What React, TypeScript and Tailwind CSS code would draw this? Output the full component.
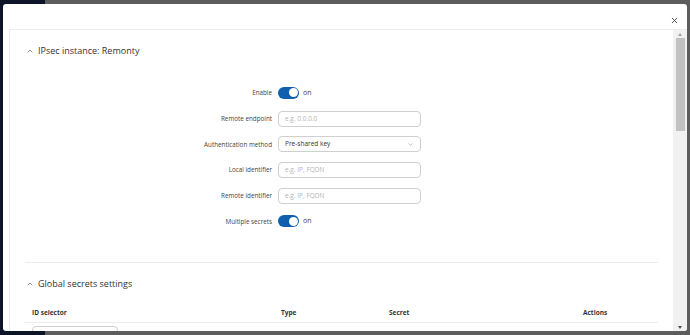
import { ChevronUp, ChevronDown, X } from "lucide-react"

const font = { fontFamily: '"Open Sans", "Noto Sans", sans-serif' }

function Toggle() {
  return (
    <div className="flex items-center gap-[4px]">
      <div className="w-[21px] h-[12px] rounded-full bg-[#0f5fae] flex items-center justify-end pr-[1.5px]">
        <div className="w-[9px] h-[9px] rounded-full bg-white" />
      </div>
      <span className="text-[7px] text-[#444]">on</span>
    </div>
  )
}

function TextInput({ placeholder }: { placeholder: string }) {
  return (
    <div className="w-[143px] h-[16px] rounded-[4px] border border-[#cfcfcf] flex items-center px-[6px]">
      <span className="text-[6.5px] text-[#b5b5b5]">{placeholder}</span>
    </div>
  )
}

function Row({ label, children }: { label: string; children: React.ReactNode }) {
  return (
    <div className="h-[25.7px] flex items-center">
      <div className="w-[253px] text-right text-[6.3px] text-[#444] pr-[6px]">{label}</div>
      {children}
    </div>
  )
}

export default function App() {
  return (
    <div className="relative w-[690px] h-[335px] bg-[#5d5d5d] overflow-hidden" style={font}>
      <div className="w-[45px] h-full bg-[#0e1428]" />

      {/* modal */}
      <div className="absolute left-[3px] top-[4px] w-[684px] h-[327px] bg-white rounded-[3px] flex flex-col overflow-hidden">
        <div className="h-[25px] flex justify-end items-end pr-[8px] pb-[4px]">
          <X size={9} strokeWidth={2.2} className="text-[#333]" />
        </div>

        <div className="flex-1 ml-[6px] border-t border-l border-[#ececec] flex min-h-0">
          <div className="flex-1 pl-[15px] pr-[15px] overflow-hidden">
            <div className="h-[40px] flex items-center pt-[1px] gap-[4px] pl-[1px]">
              <ChevronUp size={8} strokeWidth={2} className="text-[#555]" />
              <span className="text-[9px] font-medium text-[#333]">IPsec instance: Remonty</span>
            </div>

            <div className="pt-[10px] pb-[28px] border-b border-[#ececec]">
              <Row label="Enable">
                <Toggle />
              </Row>
              <Row label="Remote endpoint">
                <TextInput placeholder="e.g. 0.0.0.0" />
              </Row>
              <Row label="Authentication method">
                <div className="w-[143px] h-[16px] rounded-[4px] border border-[#cfcfcf] flex items-center justify-between px-[6px]">
                  <span className="text-[6.5px] text-[#333]">Pre-shared key</span>
                  <ChevronDown size={7} strokeWidth={1.5} className="text-[#777]" />
                </div>
              </Row>
              <Row label="Local identifier">
                <TextInput placeholder="e.g. IP, FQDN" />
              </Row>
              <Row label="Remote identifier">
                <TextInput placeholder="e.g. IP, FQDN" />
              </Row>
              <Row label="Multiple secrets">
                <Toggle />
              </Row>
            </div>

            <div className="h-[41px] flex items-center gap-[4px] pl-[1px]">
              <ChevronUp size={8} strokeWidth={2} className="text-[#555]" />
              <span className="text-[9px] font-medium text-[#333]">Global secrets settings</span>
            </div>

            <div className="grid grid-cols-[249px_108px_194px_1fr] h-[19px] items-center border-b border-[#ececec] text-[6.5px] font-bold text-[#333] pl-[7px]">
              <span>ID selector</span>
              <span>Type</span>
              <span>Secret</span>
              <span>Actions</span>
            </div>
            <div className="pt-[3px] pl-[7px]">
              <div className="w-[86px] h-[16px] rounded-[4px] border border-[#cfcfcf]" />
            </div>
          </div>

          {/* scrollbar */}
          <div className="w-[14px] bg-[#f1f1f1] flex flex-col items-center">
            <div className="h-[8px] flex items-center">
              <div className="w-0 h-0 border-l-[2.5px] border-r-[2.5px] border-b-[3px] border-l-transparent border-r-transparent border-b-[#a3a3a3]" />
            </div>
            <div className="w-[9px] h-[93px] bg-[#c1c1c1]" />
            <div className="flex-1" />
            <div className="h-[8px] flex items-center">
              <div className="w-0 h-0 border-l-[2.5px] border-r-[2.5px] border-t-[3px] border-l-transparent border-r-transparent border-t-[#505050]" />
            </div>
          </div>
        </div>
      </div>
    </div>
  )
}
